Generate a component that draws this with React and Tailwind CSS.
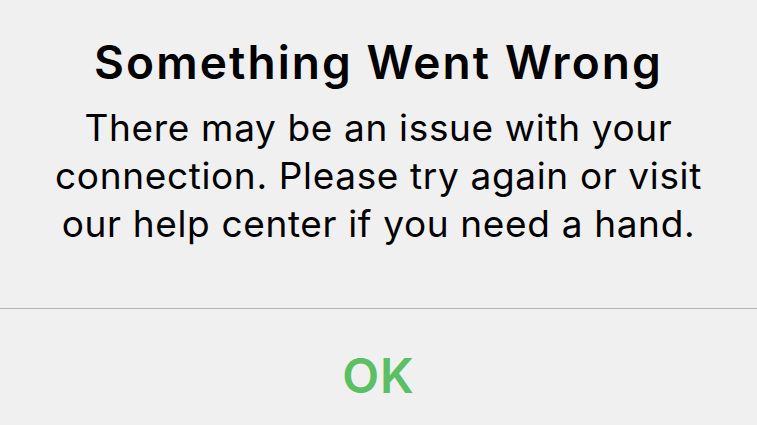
export default function App() {
  return (
    <div
      className="w-[757px] h-[425px] bg-[#f0f0f0] flex flex-col overflow-hidden"
      style={{ fontFamily: 'Inter, "Noto Sans", sans-serif' }}
    >
      <div className="h-[308px] flex flex-col items-center pt-[38px]">
        <h1 className="text-[46px] leading-[48px] font-semibold text-black tracking-[2.1px]">
          Something Went Wrong
        </h1>
        <p className="mt-[18px] text-[37px] leading-[48px] text-black text-center tracking-[0.65px]">
          There may be an issue with your
          <br />
          connection. Please try again or visit
          <br />
          our help center if you need a hand.
        </p>
      </div>
      <div className="h-px bg-[#b3b3b3]" />
      <div className="flex-1 flex items-center justify-center pt-[18px]">
        <button className="text-[48px] font-semibold text-[#5bbf63] tracking-[1px]">OK</button>
      </div>
    </div>
  );
}
